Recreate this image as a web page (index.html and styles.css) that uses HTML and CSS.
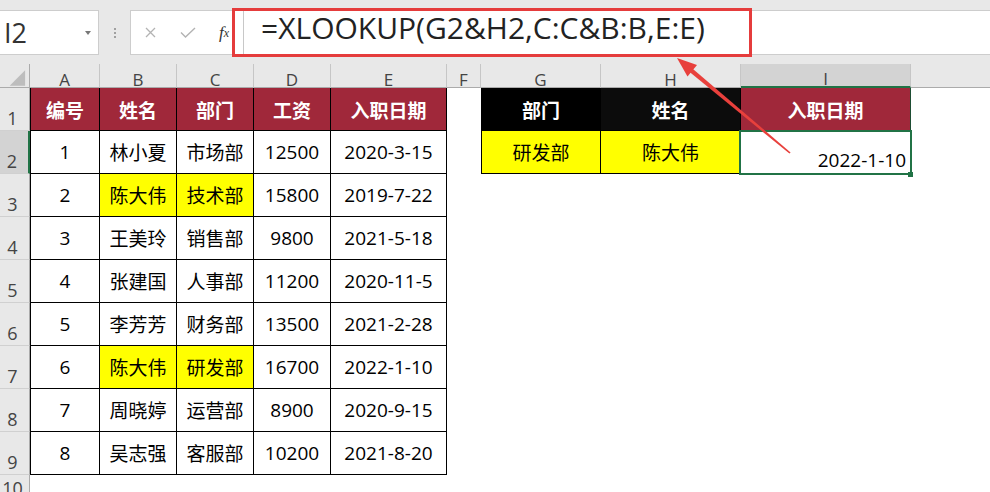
FILE: index.html
```html
<!DOCTYPE html>
<html>
<head>
<meta charset="utf-8">
<link rel="stylesheet" href="styles.css">
</head>
<body>
<div class="app">
  <div class="toolbar">
    <div class="namebox"><span class="ref">I2</span><span class="caret"></span></div>
    <div class="grip"><i></i><i></i><i></i></div>
    <div class="fxbox">
      <span class="btn cancel"><svg width="11" height="11" viewBox="0 0 11 11"><path d="M1 1 L10 10 M10 1 L1 10" stroke="#b3b3b3" stroke-width="1.3" fill="none"/></svg></span>
      <span class="btn enter"><svg width="16" height="11" viewBox="0 0 16 11"><path d="M1 5.5 L5.5 10 L15 1" stroke="#b3b3b3" stroke-width="1.4" fill="none"/></svg></span>
      <span class="btn fx"><i>f</i><sub>x</sub></span>
    </div>
    <div class="formula"><span class="split"></span><span class="ftext">=XLOOKUP(G2&amp;H2,C:C&amp;B:B,E:E)</span></div>
  </div>

  <div class="sheet">
    <!-- column headers -->
    <div class="ch corner"><svg width="30" height="24" viewBox="0 0 30 24"><polygon points="10,22 26,22 26,6" fill="#bdbdbd"/></svg></div>
    <div class="ch">A</div><div class="ch">B</div><div class="ch">C</div><div class="ch">D</div><div class="ch">E</div><div class="ch">F</div><div class="ch">G</div><div class="ch">H</div><div class="ch ch-sel">I</div><div class="ch ch-rest"></div>

    <!-- row 1 -->
    <div class="rh">1</div>
    <div class="c hd first">编号</div><div class="c hd">姓名</div><div class="c hd">部门</div><div class="c hd">工资</div><div class="c hd">入职日期</div>
    <div class="e"></div>
    <div class="c blk first">部门</div><div class="c blk blk2">姓名</div><div class="c hd i1">入职日期</div><div class="e"></div>

    <!-- row 2 -->
    <div class="rh rh-sel">2</div>
    <div class="c first">1</div><div class="c">林小夏</div><div class="c">市场部</div><div class="c">12500</div><div class="c">2020-3-15</div>
    <div class="e"></div>
    <div class="c yl first">研发部</div><div class="c yl">陈大伟</div><div class="e sel">2022-1-10</div><div class="e"></div>

    <!-- row 3 -->
    <div class="rh">3</div>
    <div class="c first">2</div><div class="c yl">陈大伟</div><div class="c yl">技术部</div><div class="c">15800</div><div class="c">2019-7-22</div>
    <div class="e"></div><div class="e"></div><div class="e"></div><div class="e"></div><div class="e"></div>

    <!-- row 4 -->
    <div class="rh">4</div>
    <div class="c first">3</div><div class="c">王美玲</div><div class="c">销售部</div><div class="c">9800</div><div class="c">2021-5-18</div>
    <div class="e"></div><div class="e"></div><div class="e"></div><div class="e"></div><div class="e"></div>

    <!-- row 5 -->
    <div class="rh">5</div>
    <div class="c first">4</div><div class="c">张建国</div><div class="c">人事部</div><div class="c">11200</div><div class="c">2020-11-5</div>
    <div class="e"></div><div class="e"></div><div class="e"></div><div class="e"></div><div class="e"></div>

    <!-- row 6 -->
    <div class="rh">6</div>
    <div class="c first">5</div><div class="c">李芳芳</div><div class="c">财务部</div><div class="c">13500</div><div class="c">2021-2-28</div>
    <div class="e"></div><div class="e"></div><div class="e"></div><div class="e"></div><div class="e"></div>

    <!-- row 7 -->
    <div class="rh">7</div>
    <div class="c first">6</div><div class="c yl">陈大伟</div><div class="c yl">研发部</div><div class="c">16700</div><div class="c">2022-1-10</div>
    <div class="e"></div><div class="e"></div><div class="e"></div><div class="e"></div><div class="e"></div>

    <!-- row 8 -->
    <div class="rh">8</div>
    <div class="c first">7</div><div class="c">周晓婷</div><div class="c">运营部</div><div class="c">8900</div><div class="c">2020-9-15</div>
    <div class="e"></div><div class="e"></div><div class="e"></div><div class="e"></div><div class="e"></div>

    <!-- row 9 -->
    <div class="rh">9</div>
    <div class="c first">8</div><div class="c">吴志强</div><div class="c">客服部</div><div class="c">10200</div><div class="c">2021-8-20</div>
    <div class="e"></div><div class="e"></div><div class="e"></div><div class="e"></div><div class="e"></div>

    <!-- row 10 -->
    <div class="rh rh-short">10</div>
    <div class="e"></div><div class="e"></div><div class="e"></div><div class="e"></div><div class="e"></div>
    <div class="e"></div><div class="e"></div><div class="e"></div><div class="e"></div><div class="e"></div>
  </div>

  <div class="callout"></div>
  <svg class="arrow" width="990" height="492" viewBox="0 0 990 492">
    <polygon points="677,58 687.5,76.5 697,65" fill="#e8403c"/>
    <polygon points="688.7,71.2 691.5,67.8 790.6,152.4 789.4,153.6" fill="#e8403c"/>
  </svg>
</div>
</body>
</html>
```

FILE: styles.css
```css
* { box-sizing: border-box; }
html, body {
  margin: 0;
  padding: 0;
  background: #ffffff;
}
body {
  width: 990px;
  height: 492px;
  overflow: hidden;
  font-family: "Open Sans", "Noto Sans CJK SC", sans-serif;
}
.app {
  position: relative;
  width: 990px;
  height: 492px;
  overflow: hidden;
}

/* ---------- formula bar ---------- */
.toolbar {
  height: 64px;
  background: #e8e8e8;
  padding-top: 10px;
  display: flex;
  align-items: flex-start;
}
.namebox {
  width: 99px;
  height: 45px;
  background: #fff;
  border: 1px solid #cdcdcd;
  border-left: none;
  display: flex;
  align-items: center;
  justify-content: space-between;
  padding: 0 7px 0 4px;
}
.ref {
  font-size: 27px;
  color: #333;
  line-height: 1;
}
.caret {
  width: 0;
  height: 0;
  border-left: 3.5px solid transparent;
  border-right: 3.5px solid transparent;
  border-top: 4px solid #777;
}
.grip {
  width: 31px;
  height: 45px;
  display: flex;
  flex-direction: column;
  align-items: center;
  justify-content: center;
  gap: 2px;
}
.grip i {
  display: block;
  width: 2px;
  height: 2px;
  background: #a0a0a0;
}
.fxbox {
  width: 102px;
  height: 45px;
  background: #fff;
  border: 1px solid #cdcdcd;
  border-right: none;
  display: flex;
  align-items: center;
}
.btn {
  display: flex;
  align-items: center;
  justify-content: center;
}
.cancel { width: 39px; }
.enter { width: 36px; }
.fx {
  width: 26px;
  justify-content: flex-end;
  padding-right: 3px;
  font-family: "Liberation Serif", serif;
  font-style: italic;
  color: #333;
  font-size: 17px;
  line-height: 1;
}
.fx i { font-style: italic; }
.fx sub {
  font-size: 12px;
  vertical-align: -1px;
}
.formula {
  flex: 1;
  height: 45px;
  background: #fff;
  border-top: 1px solid #cdcdcd;
  border-bottom: 1px solid #cdcdcd;
  display: flex;
  align-items: center;
  padding-left: 11px;
  padding-bottom: 9px;
}
.split {
  align-self: stretch;
  width: 1px;
  margin-bottom: -9px;
  background: #c8c8c8;
}
.ftext {
  margin-left: 17px;
  font-size: 30px;
  line-height: 1;
  color: #222;
  white-space: nowrap;
}

/* ---------- grid ---------- */
.sheet {
  display: grid;
  grid-template-columns: 30px 70px 77px 77px 77px 116px 34px 120px 140px 170px 1fr;
  grid-template-rows: 24px repeat(9, 43px) 24px;
}
.ch {
  background: #e8e8e8;
  border-right: 1px solid #c6c6c6;
  border-bottom: 1px solid #ababab;
  font-size: 17px;
  line-height: 15px;
  color: #444;
  display: flex;
  align-items: flex-end;
  justify-content: center;
}
.corner {
  padding: 0;
  align-items: stretch;
  border-right: 1px solid #ababab;
}
.ch-sel {
  background: #d3d3d3;
  border-bottom: 2px solid #217346;
}
.ch-rest { border-right: none; }
.rh {
  background: #e8e8e8;
  border-right: 1px solid #ababab;
  border-bottom: 1px solid #d0d0d0;
  font-size: 18px;
  line-height: 18px;
  color: #444;
  display: flex;
  align-items: flex-end;
  justify-content: center;
  padding: 0 4px 3px 0;
}
.rh-sel {
  background: #d3d3d3;
  border-right: 2px solid #217346;
}
.rh-short { padding-bottom: 0; align-items: flex-start; padding-top: 4px; }

.c, .e {
  display: flex;
  align-items: center;
  justify-content: center;
  font-size: 19px;
  color: #000;
  white-space: nowrap;
}
.c {
  border-right: 1px solid #000;
  border-bottom: 1px solid #000;
}
.c.first { border-left: 1px solid #000; }
.hd {
  background: #a0283a;
  color: #fff;
  font-weight: 700;
  font-family: "Noto Sans CJK SC", "Open Sans", sans-serif;
}
.blk {
  background: #000;
  color: #fff;
  font-weight: 700;
  font-family: "Noto Sans CJK SC", "Open Sans", sans-serif;
}
.blk2 { background: #0c0c0c; }
.yl { background: #ffff00; }
.i1 { border-right-color: #1e4d33; }
.e { background: #fff; }

.sel {
  position: relative;
  justify-content: flex-end;
  align-items: flex-end;
  padding: 0 5px 1px 0;
}
.sel::after {
  content: "";
  position: absolute;
  left: -2px;
  top: -1px;
  right: -1px;
  bottom: -1px;
  border: 2px solid #217346;
}
.sel::before {
  content: "";
  position: absolute;
  right: -2px;
  bottom: -3px;
  width: 5px;
  height: 5px;
  background: #217346;
  z-index: 2;
}

/* ---------- annotation ---------- */
.callout {
  position: absolute;
  left: 232px;
  top: 8px;
  width: 520px;
  height: 49px;
  border: 3px solid #e53c3c;
}
.arrow {
  position: absolute;
  left: 0;
  top: 0;
  pointer-events: none;
}
```
